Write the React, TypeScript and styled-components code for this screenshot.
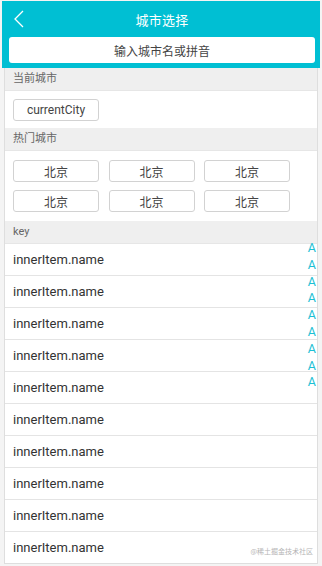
import styled, { createGlobalStyle } from 'styled-components';

const GlobalStyle = createGlobalStyle`
  html, body {
    margin: 0;
    padding: 0;
    background: #f4f4f4;
  }
  body {
    font-family: Roboto, "Liberation Sans", "Noto Sans CJK SC", sans-serif;
    color: #333;
  }
`;

const hotCities = ['北京', '北京', '北京', '北京', '北京', '北京'];
const rows = Array.from({ length: 10 }, () => 'innerItem.name');
const letters = Array.from({ length: 9 }, () => 'A');

const App = () => {
  return (
    <Page>
      <GlobalStyle />
      <Header>
        <TopBar>
          <BackButton aria-label="back">
            <svg width="10" height="18" viewBox="0 0 10 18">
              <polyline points="9,1 1,9 9,17" fill="none" stroke="#fff" strokeWidth="1.3" />
            </svg>
          </BackButton>
          <Title>城市选择</Title>
        </TopBar>
        <SearchBox>输入城市名或拼音</SearchBox>
      </Header>

      <Panel>
        <SectionTitle>当前城市</SectionTitle>
        <CurrentBlock>
          <CityButton>currentCity</CityButton>
        </CurrentBlock>

        <SectionTitle>热门城市</SectionTitle>
        <HotGrid>
          {hotCities.map((city, i) => (
            <CityButton key={i}>{city}</CityButton>
          ))}
        </HotGrid>

        <SectionTitle>key</SectionTitle>
        {rows.map((name, i) => (
          <Row key={i}>{name}</Row>
        ))}
      </Panel>

      <IndexBar>
        {letters.map((l, i) => (
          <IndexLetter key={i}>{l}</IndexLetter>
        ))}
      </IndexBar>

      <Watermark>@稀土掘金技术社区</Watermark>
    </Page>
  );
};

const Page = styled.div`
  position: relative;
  padding: 1px 2px 3px;
  height: 566px;
  box-sizing: border-box;
  overflow: hidden;
`;

const Header = styled.div`
  background: #00bfd3;
  padding: 0 5px 5px 7px;
`;

const TopBar = styled.div`
  position: relative;
  height: 36px;
  display: flex;
  align-items: center;
  justify-content: center;
`;

const BackButton = styled.div`
  position: absolute;
  left: 5px;
  top: 9px;
  display: flex;
`;

const Title = styled.div`
  color: #fff;
  font-size: 13px;
  letter-spacing: 0.3px;
`;

const SearchBox = styled.div`
  height: 26px;
  background: #fff;
  border-radius: 3px;
  display: flex;
  align-items: center;
  justify-content: center;
  font-size: 12px;
  color: #444;
`;

const Panel = styled.div`
  margin: 0 2px;
  background: #fff;
  border: 1px solid #dedede;
  border-top: none;
`;

const SectionTitle = styled.div`
  height: 22px;
  line-height: 22px;
  background: #efefef;
  padding-left: 8px;
  font-size: 11px;
  color: #666;
  border-bottom: 1px solid #e6e6e6;
`;

const CurrentBlock = styled.div`
  padding: 8px 8px 7px;
`;

const CityButton = styled.div`
  width: 86px;
  height: 22px;
  box-sizing: border-box;
  border: 1px solid #d2d2d2;
  border-radius: 3px;
  display: flex;
  align-items: center;
  justify-content: center;
  font-size: 12px;
  color: #444;
  background: #fff;
`;

const HotGrid = styled.div`
  display: grid;
  grid-template-columns: repeat(3, 86px);
  column-gap: 9.5px;
  row-gap: 8px;
  padding: 9px 8px 9px;
`;

const Row = styled.div`
  height: 31px;
  line-height: 31px;
  padding-left: 8px;
  font-size: 13px;
  color: #333;
  border-bottom: 1px solid #e4e4e4;

  &:last-child {
    border-bottom: none;
  }
`;

const IndexBar = styled.div`
  position: absolute;
  right: 6px;
  top: 240px;
  display: flex;
  flex-direction: column;
  align-items: center;
`;

const IndexLetter = styled.div`
  font-size: 12.5px;
  line-height: 16.8px;
  color: #1cc0d4;
`;

const Watermark = styled.div`
  position: absolute;
  right: 9px;
  bottom: 10px;
  font-size: 7px;
  color: #b5b5b5;
  font-family: "Noto Sans CJK SC", sans-serif;
`;

export default App;
